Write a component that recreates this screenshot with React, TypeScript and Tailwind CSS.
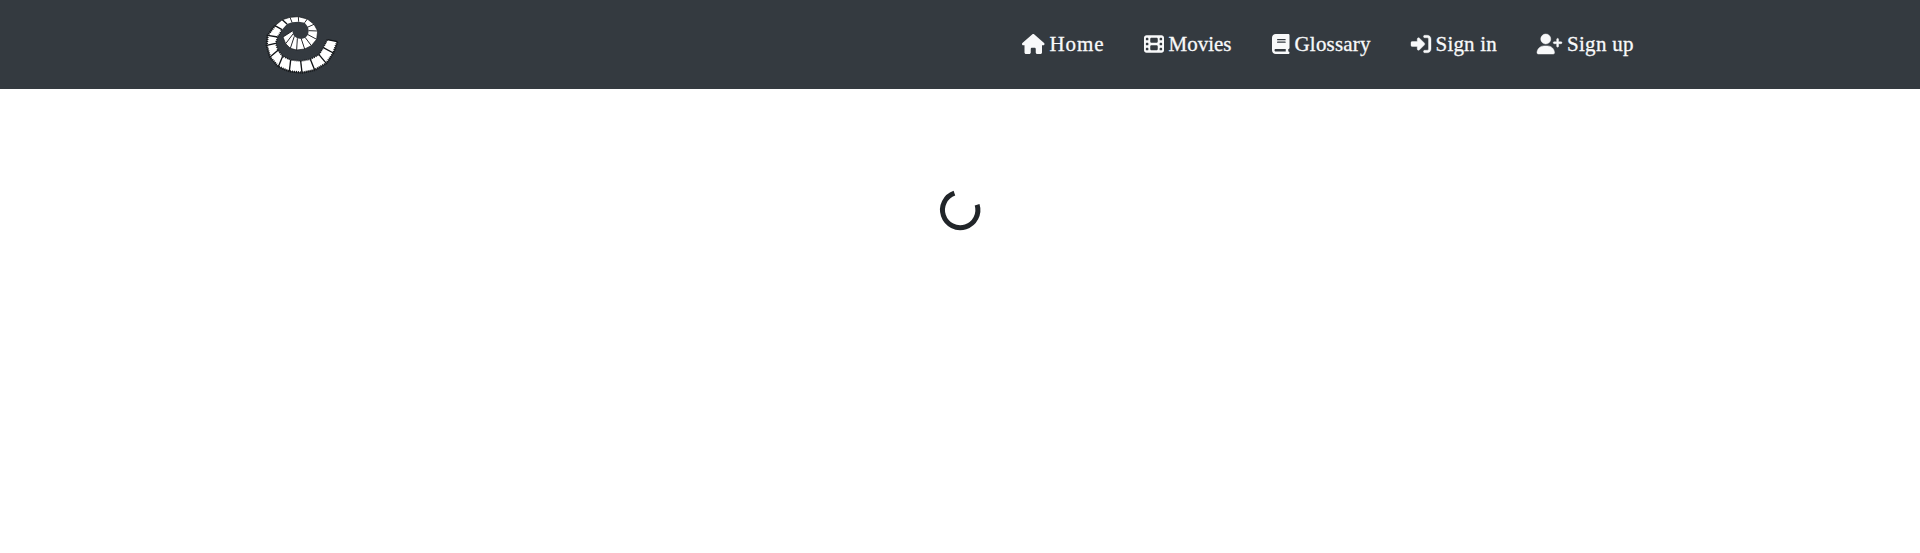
import React from "react";
import { FaHouse, FaFilm, FaBook, FaRightToBracket, FaUserPlus } from "react-icons/fa6";

// Each row is one divider of the film strip: outer x, outer y, inner x, inner y.
const dividers = [
  [262, 122, 232, 116], [250, 156, 220, 140], [229, 187, 207, 161], [194, 207, 181, 175],
  [156, 215, 152, 180], [118, 211, 122, 177], [85, 197, 98, 166], [60, 168, 84, 148],
  [50, 133, 77, 127], [53, 103, 83, 108], [75, 74, 96, 86], [97, 56, 111, 69],
  [120, 49, 126, 64], [145, 47, 146, 62], [172, 54, 164, 65], [192, 70, 174, 78],
  [203, 90, 176, 89], [200, 115, 174, 101], [184, 134, 166, 110], [164, 144, 154, 114],
  [140, 147, 142, 112], [121, 142, 133, 106], [107, 128, 129, 99], [99, 108, 127, 90],
];

function Logo() {
  return (
    <svg className="block h-[62px] w-[76px]" viewBox="42 36 228 186" aria-hidden="true">
      {dividers.slice(1).map((b, i) => {
        const a = dividers[i];
        return (
          <polygon
            key={i}
            points={`${a[0]},${a[1]} ${b[0]},${b[1]} ${b[2]},${b[3]} ${a[2]},${a[3]}`}
            fill="#fff"
          />
        );
      })}
      {dividers.map((d, i) => (
        <line key={i} x1={d[0]} y1={d[1]} x2={d[2]} y2={d[3]} stroke="#111417" strokeWidth={i < 12 ? 4 : 2.6} />
      ))}
      <polyline points={dividers.map((d) => `${d[0]},${d[1]}`).join(" ")} fill="none" stroke="#14171a" strokeWidth="2" />
      <polyline points={dividers.slice(0, 11).map((d) => `${d[0]},${d[1]}`).join(" ")} fill="none" stroke="#14171a" strokeWidth="7" strokeDasharray="3 3" />
      <polyline points={dividers.slice(0, 11).map((d) => `${d[2]},${d[3]}`).join(" ")} fill="none" stroke="#14171a" strokeWidth="5" strokeDasharray="3 3" />
    </svg>
  );
}

const links = [
  { label: "Home", Icon: FaHouse, icon: "w-[22.5px]", text: "w-[54px] tracking-[0.9px]" },
  { label: "Movies", Icon: FaFilm, icon: "w-[20px]", text: "w-[63.5px]" },
  { label: "Glossary", Icon: FaBook, icon: "w-[17.5px]", text: "w-[76px] tracking-[0.2px]" },
  { label: "Sign in", Icon: FaRightToBracket, icon: "w-[20px] [stroke-width:10px]", text: "w-[61.5px] tracking-[0.2px]" },
  { label: "Sign up", Icon: FaUserPlus, icon: "w-[25px] [stroke-width:12px]", text: "w-[67px] tracking-[0.3px]" },
];

export default function App() {
  return (
    <div className="min-h-[553px] bg-white font-['Liberation_Serif',serif]">
      <header className="flex h-[89px] items-center justify-between bg-[#343a40] pr-[286px] pb-[2px] pl-[264px]">
        <a href="#" aria-label="Home page"><Logo /></a>
        <nav className="flex items-center gap-10 text-[21px] leading-[30px] text-[#f8f9fa]">
          {links.map(({ label, Icon, icon, text }) => (
            <a key={label} href="#" className="flex items-center gap-[5px] whitespace-nowrap">
              <Icon className={`h-5 shrink-0 overflow-visible ${icon}`} />
              <span className={`${text} [-webkit-text-stroke:0.3px_#f8f9fa]`}>{label}</span>
            </a>
          ))}
        </nav>
      </header>
      <main className="flex justify-center pt-[101px]">
        <svg className="size-10 overflow-visible" viewBox="0 0 40 40" role="status">
          <path d="M14.4 3.2A17.7 17.7 0 1 0 37.1 14.7" fill="none" stroke="#212529" strokeWidth="5" />
        </svg>
      </main>
    </div>
  );
}
